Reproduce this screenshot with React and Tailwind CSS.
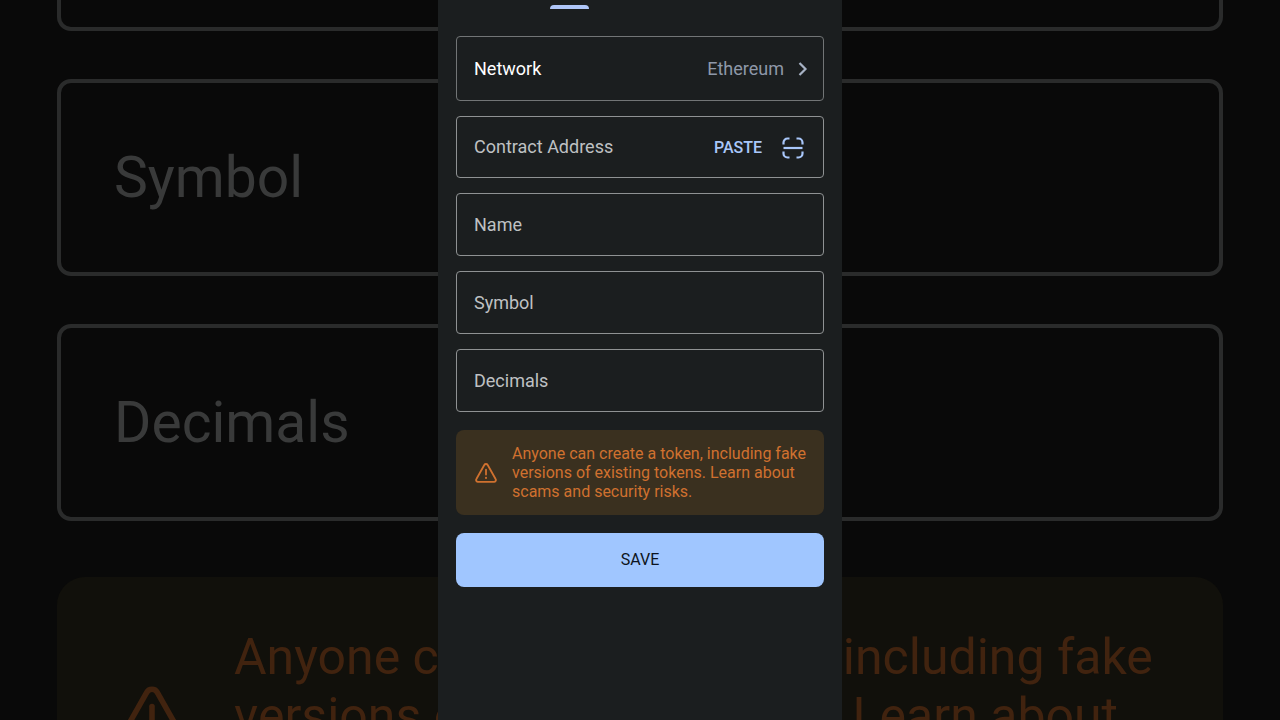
import React, { useState } from 'react';

const fields = [
  { id: 'name', label: 'Name' },
  { id: 'symbol', label: 'Symbol' },
  { id: 'decimals', label: 'Decimals' },
];

const warningText =
  'Anyone can create a token, including fake versions of existing tokens. Learn about scams and security risks.';

const WarningIcon = ({ className }) => (
  <svg viewBox="0 0 22 20" fill="none" stroke="currentColor" strokeLinecap="round" strokeLinejoin="round" className={className}>
    <path d="M9.3 2 1.4 16a1.9 1.9 0 0 0 1.7 2.9h15.8a1.9 1.9 0 0 0 1.7-2.9L12.7 2a1.95 1.95 0 0 0-3.4 0Z" strokeWidth="1.8" />
    <path d="M11 6.6v5" strokeWidth="1.8" />
    <path d="M11 14.800v.1" strokeWidth="2" />
  </svg>
);

const ScanIcon = () => (
  <svg viewBox="0 0 22 22" fill="none" stroke="currentColor" strokeWidth="2.2" className="w-[22px] h-[22px]">
    <path d="M1.500 7.500V5.500a4 4 0 0 1 4-4H7.500M14.500 1.500h2a4 4 0 0 1 4 4V7.500M20.500 14.500v2a4 4 0 0 1-4 4h-2M7.500 20.500h-2a4 4 0 0 1-4-4V14.500" />
    <path d="M1.500 11h19" />
  </svg>
);

const ChevronIcon = () => (
  <svg viewBox="0 0 10 14" fill="none" stroke="currentColor" strokeWidth="2.2" className="w-[10px] h-[14px]">
    <path d="m1.500 1 6 6-6 6" />
  </svg>
);

// Enlarged, dimmed copy of the form behind the panel
const Backdrop = () => (
  <div aria-hidden="true" className="absolute inset-0 overflow-hidden px-[57px] flex flex-col gap-12">
    <div className="h-[31px] shrink-0 border-4 border-t-0 border-[#2a2b2b] rounded-b-[14px]"></div>
    <div className="h-[197px] shrink-0 border-4 border-[#2a2b2b] rounded-[14px] px-[53px] flex items-center text-[57px] text-[#393a3a]">
      Symbol
    </div>
    <div className="h-[197px] shrink-0 border-4 border-[#2a2b2b] rounded-[14px] px-[53px] flex items-center text-[57px] text-[#393a3a]">
      Decimals
    </div>
    <div className="mt-2 shrink-0 rounded-[28px] bg-[#11100b] text-[#41230f] pl-[61px] pr-12 py-[51px] flex items-center gap-12">
      <WarningIcon className="w-[68px] h-[62px] shrink-0" />
      <p className="text-[50px] leading-[59px]">{warningText}</p>
    </div>
  </div>
);

const App = () => {
  const [address, setAddress] = useState('');
  const [values, setValues] = useState({ name: '', symbol: '', decimals: '' });

  const handlePaste = async () => {
    const text = await navigator.clipboard.readText();
    setAddress(text);
  };

  const handleChange = (e) => {
    setValues({ ...values, [e.target.id]: e.target.value });
  };

  return (
    <div className="relative min-h-screen overflow-hidden bg-[#090909] font-[Roboto,sans-serif]">
      <Backdrop />
      <main className="relative mx-auto w-full max-w-[404px] min-h-screen bg-[#1b1e1f] px-[18px] pt-[5px]">
        <div className="ml-[94px] w-[39px] h-1 rounded-t-full bg-[#afc6f8]"></div>

        <form className="mt-[27px]" onSubmit={(e) => e.preventDefault()}>
          <div className="flex flex-col gap-[15px]">
            <button
              type="button"
              className="w-full h-[65px] pl-[17px] pr-[15px] flex items-center border border-[#727576] rounded-[4px] text-lg"
            >
              <span className="text-white">Network</span>
              <span className="ml-auto mr-[14px] text-[#8e98a8]">Ethereum</span>
              <span className="text-[#a7b2c4]">
                <ChevronIcon />
              </span>
            </button>

            <div className="h-[62px] pl-[17px] pr-[19px] flex items-center border border-[#8f9293] rounded-[4px]">
              <input
                id="address"
                aria-label="Contract Address"
                value={address}
                onChange={(e) => setAddress(e.target.value)}
                placeholder="Contract Address"
                className="min-w-0 flex-1 bg-transparent text-lg text-white placeholder:text-[#bfc1c3] outline-none"
              />
              <div className="pt-[2px] flex items-center gap-5 text-[#a9c7fa]">
                <button type="button" onClick={handlePaste} className="text-base font-medium">
                  PASTE
                </button>
                <button type="button" aria-label="Scan QR code">
                  <ScanIcon />
                </button>
              </div>
            </div>

            {fields.map((field) => (
              <div key={field.id} className="h-[63px] px-[17px] flex items-center border border-[#8f9293] rounded-[4px]">
                <input
                  id={field.id}
                  aria-label={field.label}
                  value={values[field.id]}
                  onChange={handleChange}
                  placeholder={field.label}
                  className="w-full bg-transparent text-lg text-white placeholder:text-[#bfc1c3] outline-none"
                />
              </div>
            ))}
          </div>

          <div className="mt-[18px] rounded-lg bg-[#3a301f] text-[#d0712f] pl-[19px] pr-3 py-[14px] flex items-center gap-[15px]">
            <WarningIcon className="w-[22px] h-5 shrink-0" />
            <p className="text-base leading-[19px]">{warningText}</p>
          </div>

          <button
            type="submit"
            className="mt-[18px] w-full h-[54px] rounded-lg bg-[#a0c6ff] text-base text-[#0d1420]"
          >
            SAVE
          </button>
        </form>
      </main>
    </div>
  );
};

export default App;
